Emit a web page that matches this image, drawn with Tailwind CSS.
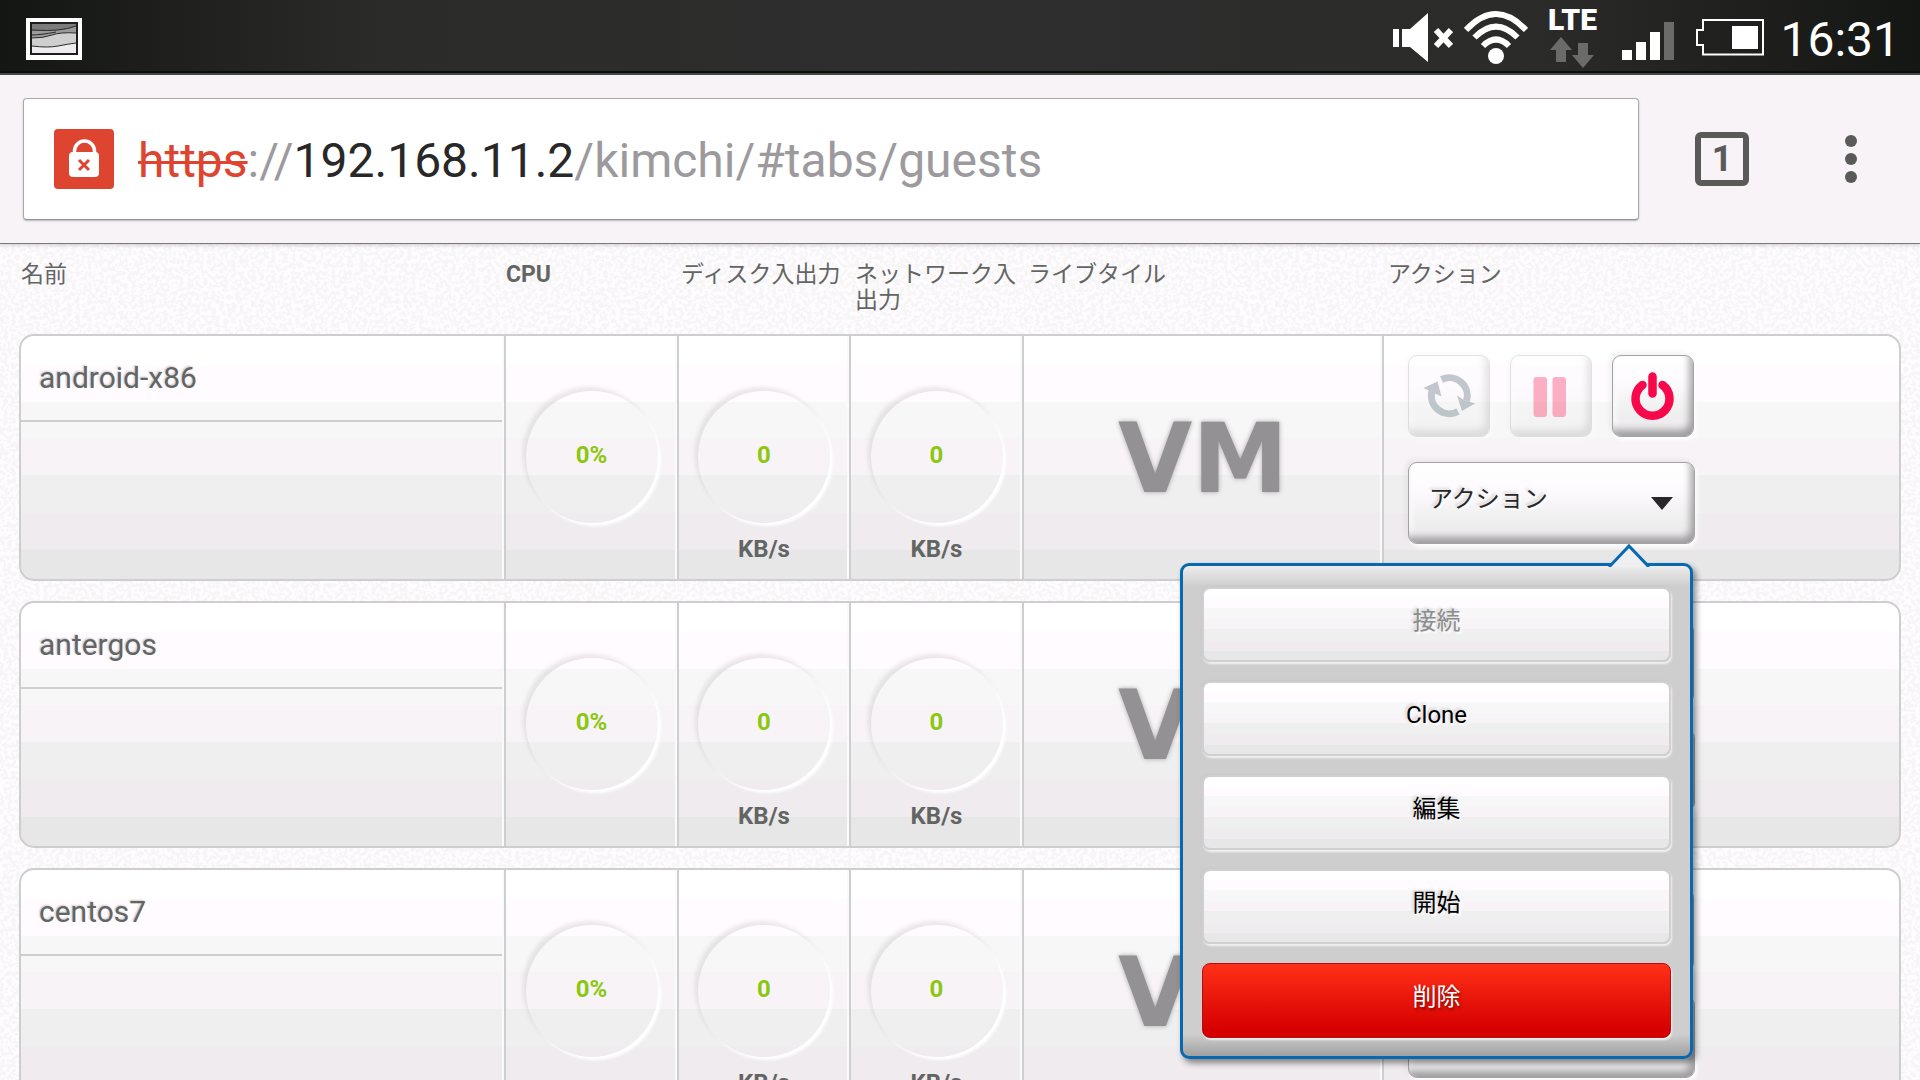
<!DOCTYPE html>
<html lang="ja">
<head>
<meta charset="utf-8">
<title>Kimchi - guests</title>
<script src="https://cdn.jsdelivr.net/npm/@tailwindcss/browser@4"></script>
</head>
<body class="flex h-screen flex-col overflow-hidden bg-[#fbf9fb] font-[Roboto,'Noto_Sans_CJK_JP',sans-serif] text-[#636563]">

<!-- Android status bar -->
<header class="flex h-[75px] shrink-0 items-start justify-between border-b-2 border-[#4a4a48] bg-[linear-gradient(90deg,#141614,#2b2b2a_20%,#2e2e2e_50%,#2b2b2a_80%,#141614)] pr-5 pl-[26px] text-white shadow-[inset_0_-2px_0_#0c100c]">
  <svg class="mt-[18px]" width="56" height="42" viewBox="0 0 56 42" aria-label="スクリーンショット">
    <rect width="56" height="42" fill="#fff"/>
    <rect x="4" y="4" width="48" height="33" fill="#1c1e1c"/>
    <rect x="6" y="6" width="44" height="29" fill="#7b7b7b"/>
    <path d="M6 13Q22 12 32 12T50 8V35H6Z" fill="#9a9a9a"/>
    <path d="M6 20Q18 20 26 17T50 15V35H6Z" fill="#cfcfcf"/>
    <path d="M6 28Q22 30 32 28T50 25V35H6Z" fill="#eeecee"/>
    <path d="M6 12Q22 13 32 12T50 8M6 17Q14 17 30 14M6 20Q18 20 26 17T50 15M6 28Q22 30 32 28T50 25" fill="none" stroke="#2c2c2c"/>
  </svg>
  <div class="flex items-start">
    <svg width="60" height="72" viewBox="1395 0 60 72" fill="#fff" aria-label="ミュート">
      <path d="M1395 29h6v18h-6zM1404 29h8L1430 13V62L1412 47h-8z"/>
      <path d="M1438 30L1453 46M1453 30L1438 46" stroke="#fff" stroke-width="6"/>
    </svg>
    <svg class="ml-[11px]" width="64" height="72" viewBox="1466 0 64 72" aria-label="Wi-Fi">
      <circle cx="1498" cy="56" r="8" fill="#fff"/>
      <g fill="none" stroke="#fff" stroke-width="6"><path d="M1468 30Q1498 -2 1528 30"/><path d="M1476.500 37.500Q1498 16 1519.500 37.500"/><path d="M1485 46Q1498 33 1511 46"/></g>
    </svg>
    <div class="ml-5 flex w-12 flex-col items-center pt-1.5">
      <span class="text-[30px] leading-[28px] font-black">LTE</span>
      <svg class="mt-[3px]" width="44" height="32" viewBox="0 0 44 32" fill="#6b6b6a" aria-hidden="true"><path d="M11 0L22 13H16V25H6V13H0zM28 6H38V18H44L33 31 22 18H28z"/></svg>
    </div>
    <svg class="ml-[26px]" width="52" height="72" viewBox="1624 0 52 72" fill="#fff" aria-label="電波"><path d="M1624 50h10v10h-10zM1638 42h10v18h-10zM1652 32h10v28h-10z"/><path d="M1666 22h10v38h-10z" fill="#6b6b6a"/></svg>
    <svg class="ml-[22px]" width="68" height="72" viewBox="1698 0 68 72" aria-label="電池"><path d="M1705 20H1765V54.500H1705V45H1699V30H1705z" fill="none" stroke="#fff" stroke-width="2"/><path d="M1734 26h26v23h-26z" fill="#fff"/></svg>
    <time class="ml-4 pt-3 text-5xl leading-[56px]">16:31</time>
  </div>
</header>

<!-- Browser toolbar -->
<nav class="relative flex h-[169px] shrink-0 items-center border-b border-[#7b797b] bg-[#f7f3f7] pr-[57px] pb-[1px] pl-[23px] shadow-[0_1px_4px_rgba(0,0,0,0.2)]">
  <div class="flex h-[122px] flex-1 items-center rounded-[4px] border border-[#adaaad] border-b-[#949294] bg-white pl-[30px] shadow-[0_1px_2px_rgba(0,0,0,0.25)]">
    <button type="button" aria-label="証明書エラー">
      <svg width="60" height="60" viewBox="0 0 60 60"><rect width="60" height="60" rx="4" fill="#de4531"/><path d="M20.500 26V22a10 10 0 0 1 20 0v4" fill="none" stroke="#fff" stroke-width="3.500"/><rect x="15" y="23" width="30" height="25" rx="4" fill="#fff"/><path d="M25 31l10 10M35 31l-10 10" stroke="#de4531" stroke-width="3"/></svg>
    </button>
    <div role="textbox" contenteditable="true" aria-label="URL" class="ml-6 pt-1 text-5xl whitespace-nowrap text-[#9c9a9c]"><span class="text-[#de4531] line-through decoration-3">https</span>://<span class="text-[#292829]">192.168.11.2</span>/kimchi/#tabs/guests</div>
  </div>
  <button type="button" aria-label="タブ" class="ml-14 size-[54px] rounded-md border-6 border-[#5a5a59] text-4xl leading-[42px] font-bold text-[#5a5a59]">1</button>
  <button type="button" aria-label="メニュー" class="ml-[90px]"><svg width="24" height="54" viewBox="0 0 24 54" fill="#5a5a59"><circle cx="12" cy="9" r="6"/><circle cx="12" cy="27" r="6"/><circle cx="12" cy="45" r="6"/></svg></button>
</nav>

<main class="relative flex-1 overflow-hidden pr-[19px] pl-[19px]">
  <svg class="absolute inset-0 -z-10 h-full w-full" aria-hidden="true">
    <filter id="paper" x="0" y="0" width="100%" height="100%" color-interpolation-filters="sRGB">
      <feTurbulence type="fractalNoise" baseFrequency="0.25" numOctaves="2" seed="4"/>
      <feColorMatrix values="0 0 0 0 .966  0 0 0 0 .966  0 0 0 0 .966  14 0 0 0 -6.500"/>
    </filter>
    <rect width="100%" height="100%" fill="#fffbff"/>
    <rect width="100%" height="100%" filter="url(#paper)"/>
  </svg>
  <table class="-mt-0.5 w-full table-fixed border-separate border-spacing-x-0 border-spacing-y-5">
    <colgroup><col class="w-[487px]"><col class="w-[173px]"><col class="w-[172px]"><col class="w-[173px]"><col class="w-[360px]"><col></colgroup>
    <thead class="text-left align-top text-[23px] leading-[26px]">
      <tr>
        <th class="p-0 pl-0.5 font-normal">名前</th>
        <th class="p-0 font-bold">CPU</th>
        <th class="p-0 pl-0.5 font-normal">ディスク入出力</th>
        <th class="p-0 pl-1 font-normal">ネットワーク入出力</th>
        <th class="p-0 pl-1 font-normal">ライブタイル</th>
        <th class="p-0 pl-1 font-normal">アクション</th>
      </tr>
    </thead>
    <tbody id="guests"></tbody>
  </table>
</main>

<script>
const bands = 'bg-[linear-gradient(#fff_12%,#fffbff_12%,#fffbff_27%,#f7f7f7_27%,#f7f7f7_42%,#f7f3f7_42%,#f7f3f7_57%,#efefef_57%,#efefef_73%,#efebef_73%,#efebef_88%,#e6e7e6_88%)]';
const cell = 'h-[247px] border-y-2 border-[#cecece] p-0 align-top ' + bands;
const divided = ' border-r-2 shadow-[inset_-2px_0_0_#fbfafb]';
const raised = 'rounded-[9px] border border-[#a5a2a5] bg-[linear-gradient(#fff,#fdfafd_35%,#f3f2f3_60%,#eae8ea)] shadow-[inset_-4px_-6px_7px_rgba(0,0,0,0.32),inset_3px_3px_5px_#fff,2px_3px_4px_#fff,-3px_-3px_5px_rgba(0,0,0,0.05)]';
const tool = 'size-[82px] ' + raised;
const item = 'h-[75px] rounded-[8px] border-2 border-[#d0d0d0] pb-2 text-2xl text-black shadow-[1px_2px_2px_#f2f2f2,-1px_-1px_2px_#c8c8c8] [text-shadow:-2px_-2px_3px_rgba(0,0,0,0.15),2px_2px_2px_#fff] ' + bands;

const gauge = (value, unit) => `
  <td class="${cell}${divided}">
    <div class="flex flex-col items-center pt-[55px] text-2xl font-bold">
      <div class="flex size-[132px] items-center justify-center rounded-full pb-1 text-[#8cc710] shadow-[3px_3px_3px_#fff,-3px_-4px_4px_rgba(110,90,100,0.13)]">${value}</div>
      <div class="mt-2.5">${unit}</div>
    </div>
  </td>`;

const menu = `
  <div role="menu" class="absolute top-[227px] right-0.5 z-10 flex h-[496px] w-[513px] flex-col gap-[19px] rounded-[9px] border-[3px] border-[#0869b0] bg-[linear-gradient(#eeedee,#cecece_20px,#cecece_468px,#a0a0a0)] px-[19px] pt-[21px] shadow-[3px_4px_6px_rgba(0,0,0,0.45)]">
    <svg class="absolute -top-[22px] right-10" width="42" height="23" viewBox="0 0 42 23" aria-hidden="true"><path d="M1 23L21 2L41 23" fill="#efeef0" stroke="#0869b0" stroke-width="3"/></svg>
    <button type="button" role="menuitem" disabled class="${item}"><span class="text-[#8c8c8c]">接続</span></button>
    <button type="button" role="menuitem" class="${item}">Clone</button>
    <button type="button" role="menuitem" class="${item}">編集</button>
    <button type="button" role="menuitem" class="${item}">開始</button>
    <button type="button" role="menuitem" class="h-[75px] rounded-[8px] border border-[#b50c10] bg-[linear-gradient(#ff3018,#d60000_90%)] pb-2 text-2xl text-white shadow-[1px_2px_2px_#f2f2f2] [text-shadow:1px_2px_3px_rgba(0,0,0,0.5)]">削除</button>
  </div>`;

document.getElementById('guests').innerHTML = ['android-x86', 'antergos', 'centos7'].map((name, i) => `
  <tr>
    <td class="${cell}${divided} rounded-l-[15px] border-l-2">
      <div class="mr-0.5 h-[86px] border-b-2 border-[#cecece] pt-[22px] pl-[18px] text-[30px] leading-10 [text-shadow:-1px_-1px_2px_rgba(0,0,0,0.2),1px_1px_2px_#fff]">${name}</div>
    </td>
    ${gauge('0%', '')}${gauge('0', 'KB/s')}${gauge('0', 'KB/s')}
    <td class="${cell}${divided}">
      <div class="pt-[66px] text-center font-['DejaVu_Sans'] text-[96px] leading-[114px] font-bold text-[#939193] [text-shadow:0_0_5px_rgba(0,0,0,0.3)]">VM</div>
    </td>
    <td class="${cell} rounded-r-[15px] border-r-2">
      <div class="relative ml-6 flex w-[287px] flex-wrap gap-x-5 gap-y-[25px] pt-[19px]">
        <button type="button" disabled aria-label="リセット" class="${tool} opacity-30"><svg width="80" height="80" viewBox="1 1 80 80" fill="#37535f"><path d="M33.500 24.500A18 18 0 0 1 58.500 46M50 56.500A18 18 0 0 1 24 36" fill="none" stroke="#37535f" stroke-width="7"/><path d="M49 40.500L56 45 67 48.500 54 56zM15.500 33L29.500 26.500 33.500 41.500 26 38z"/></svg></button>
        <button type="button" disabled aria-label="一時停止" class="${tool} opacity-30"><svg width="80" height="80" viewBox="1 1 80 80" fill="#f7003f"><rect x="23.500" y="22" width="13.500" height="40" rx="3"/><rect x="42.500" y="22" width="13.500" height="40" rx="3"/></svg></button>
        <button type="button" aria-label="電源" class="${tool}"><svg width="80" height="80" viewBox="1 1 80 80" fill="none" stroke="#f7084a" stroke-width="8.500" stroke-linecap="round"><path d="M30.500 30A17 17 0 1 0 50.500 30M40.500 21.500V38.500"/></svg></button>
        <button type="button" aria-haspopup="menu" aria-expanded="${i === 0}" class="flex h-[82px] w-full items-start justify-between pt-[18px] pr-[21px] pl-5 text-2xl leading-9 text-[#292829] [text-shadow:-2px_-2px_3px_rgba(0,0,0,0.15),2px_2px_2px_#fff] ${raised}">アクション<svg class="mt-4" width="22" height="13" viewBox="0 0 22 13" fill="#292829" aria-hidden="true"><path d="M0 0H22L11 13z"/></svg></button>
        ${i === 0 ? menu : ''}
      </div>
    </td>
  </tr>`).join('');
</script>
</body>
</html>
